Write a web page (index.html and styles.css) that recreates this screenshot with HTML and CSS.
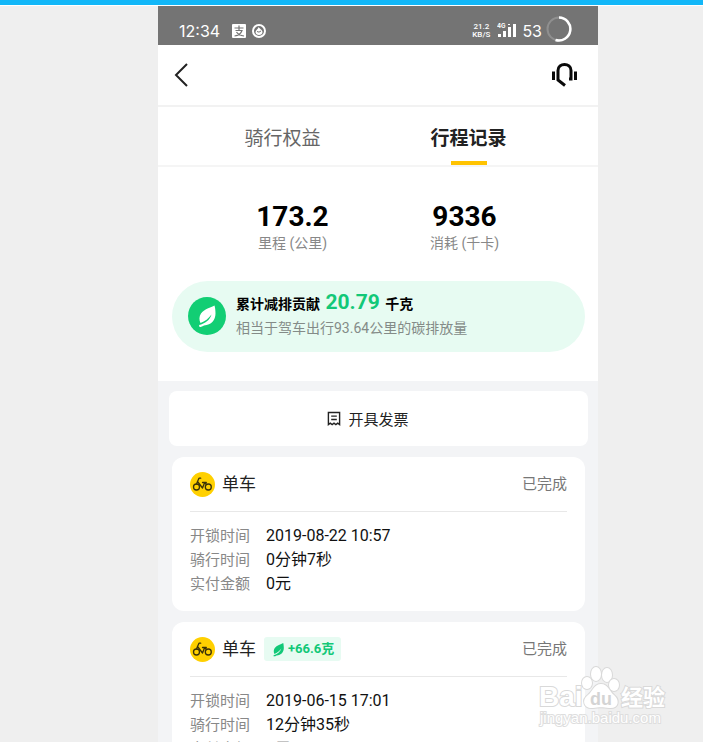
FILE: index.html
```
<!DOCTYPE html>
<html lang="zh-CN">
<head>
    <meta charset="UTF-8">
    <meta name="viewport" content="width=device-width, initial-scale=1.0">
    <title>行程记录</title>
    <link rel="stylesheet" href="styles.css">
</head>
<body>
    <!-- 公用图标 -->
    <svg class="symbols" aria-hidden="true">
        <symbol id="leaf" viewBox="0 0 24 24">
            <path d="M19.500 1.500C16 3.500 9 5 6 9.500C4 12.500 4 16 5.500 19C10 17.500 13.500 14.500 16.500 10.500C15 16 10 19.700 4 21L4.500 23C6 23 8 22.300 9 21.500C16.500 21 20.500 16 20.500 9.500C20.500 6 20 3 19.500 1.500Z"/>
        </symbol>
        <symbol id="bike" viewBox="0 0 25 25">
            <circle cx="12.500" cy="12.500" r="12.500" fill="#ffd000"/>
            <g fill="none" stroke="#3b3208" stroke-width="1.300" stroke-linecap="round" stroke-linejoin="round">
                <circle cx="6.500" cy="15" r="3"/>
                <circle cx="18.300" cy="15" r="3"/>
                <path d="M10.700 6.200H9L7.500 9.500L6.500 12M7.500 9.500L12.500 16L14.700 10.500L16.500 12.500M12.500 10.500H16.300"/>
            </g>
        </symbol>
    </svg>

    <div class="page">
        <main class="phone">
            <div class="status-bar">
                <span class="clock">12:34</span>
                <svg class="pay-icon" width="14" height="14" viewBox="0 0 14 14">
                    <rect width="14" height="14" rx="1" fill="#fff"/>
                    <path d="M2.500 4H11.500M7 1.500V6.500M3.500 6.500H10C9 9.500 6 11.500 2.500 12M4.500 8C6 10.500 9 11.500 12 12" fill="none" stroke="#747474" stroke-width="1.200"/>
                </svg>
                <svg width="14" height="14" viewBox="0 0 14 14">
                    <circle cx="7" cy="7" r="6" fill="none" stroke="#fff" stroke-width="2"/>
                    <path d="M6.500 3C7 4.500 10.500 5.500 10.500 8C10.500 10 9 11 7 11S3.500 10 3.500 8C3.500 6 6.500 5 6.500 3Z" fill="#fff"/>
                    <path d="M5 7.500Q7 9 9 7" fill="none" stroke="#747474"/>
                </svg>
                <span class="net-speed">21.2<br>KB/S</span>
                <svg class="signal" width="19" height="15" viewBox="0 0 19 15" fill="#fff">
                    <text x="0" y="5" font-size="6" font-weight="700">4G</text>
                    <rect x="1" y="11" width="3" height="3"/>
                    <rect x="6" y="8" width="3" height="6"/>
                    <rect x="11" y="4" width="3" height="10"/>
                    <rect x="11" y="1" width="2" height="1"/>
                    <rect x="16" y="1" width="3" height="13"/>
                </svg>
                <span class="battery-level">53</span>
                <svg class="battery" width="26" height="26" viewBox="0 0 26 26" fill="none">
                    <circle cx="13" cy="13" r="11.500" stroke="#8f8f8f" stroke-width="2"/>
                    <path d="M13 1.500A11.500 11.500 0 1 1 9.500 24" stroke="#fff" stroke-width="2.500"/>
                </svg>
            </div>

            <header class="nav-bar">
                <button type="button" aria-label="返回">
                    <svg width="16" height="24" viewBox="0 0 16 24" fill="none" stroke="#222" stroke-width="2">
                        <path d="M13 1L2 12L13 23"/>
                    </svg>
                </button>
                <button type="button" aria-label="客服">
                    <svg width="26" height="26" viewBox="0 0 26 26" fill="none" stroke="#0a0a0a" stroke-width="3">
                        <path d="M2.500 9.500V18M24.500 9.500V18"/>
                        <path d="M18 17H20V8.500C20 .5 7 .5 7 8.500V18L14 23.500"/>
                    </svg>
                </button>
            </header>

            <div class="tabs" role="tablist">
                <button type="button" class="tab" role="tab" aria-selected="false">骑行权益</button>
                <button type="button" class="tab active" role="tab" aria-selected="true">行程记录</button>
            </div>

            <section class="summary">
                <div class="stats">
                    <div class="stat">
                        <strong>173.2</strong>
                        <span>里程 (公里)</span>
                    </div>
                    <div class="stat">
                        <strong>9336</strong>
                        <span>消耗 (千卡)</span>
                    </div>
                </div>
                <div class="carbon">
                    <span class="carbon-icon">
                        <svg width="24" height="24"><use href="#leaf"/></svg>
                    </span>
                    <div class="carbon-text">
                        <p class="carbon-total">累计减排贡献 <em>20.79</em> 千克</p>
                        <p class="carbon-note">相当于驾车出行93.64公里的碳排放量</p>
                    </div>
                </div>
            </section>

            <section class="records">
                <button type="button" class="invoice">
                    <svg width="14" height="15" viewBox="0 0 15 16" fill="none" stroke="#222" stroke-width="1.500">
                        <path d="M1.500 14.500V1.500H13.500V14.500L11.500 13L9.500 14.500L7.500 13L5.500 14.500L3.500 13ZM4.500 5.500H10.500M4.500 9H10.500"/>
                    </svg>
                    开具发票
                </button>

                <article class="card">
                    <div class="card-head">
                        <svg width="25" height="25"><use href="#bike"/></svg>
                        <h2>单车</h2>
                        <span class="state">已完成</span>
                    </div>
                    <dl>
                        <dt>开锁时间</dt><dd>2019-08-22 10:57</dd>
                        <dt>骑行时间</dt><dd>0分钟7秒</dd>
                        <dt>实付金额</dt><dd>0元</dd>
                    </dl>
                </article>

                <article class="card">
                    <div class="card-head">
                        <svg width="25" height="25"><use href="#bike"/></svg>
                        <h2>单车</h2>
                        <span class="saving">
                            <svg width="15" height="15"><use href="#leaf"/></svg>
                            +66.6克
                        </span>
                        <span class="state">已完成</span>
                    </div>
                    <dl>
                        <dt>开锁时间</dt><dd>2019-06-15 17:01</dd>
                        <dt>骑行时间</dt><dd>12分钟35秒</dd>
                        <dt>实付金额</dt><dd>0元</dd>
                    </dl>
                </article>
            </section>
        </main>
    </div>

    <!-- 水印 -->
    <svg class="watermark" width="132" height="66" viewBox="0 0 132 66">
        <g class="mark">
            <text x="2" y="42" font-size="28" font-weight="700">Bai</text>
            <ellipse cx="50" cy="19" rx="5" ry="6"/>
            <ellipse cx="59" cy="10" rx="5" ry="7"/>
            <ellipse cx="70" cy="11" rx="5" ry="7"/>
            <ellipse cx="77" cy="21" rx="5" ry="6"/>
            <path d="M64 20C57 20 56 27 51 31C44 36 47 45 56 44C62 43 66 43 72 44C82 45 83 36 77 31C72 27 71 20 64 20Z"/>
            <text x="84" y="41" font-size="22" font-weight="700">经验</text>
        </g>
        <text class="paw-text" x="53" y="41" font-size="18" font-weight="700">du</text>
        <text class="site" x="3" y="59" font-size="15">jingyan.baidu.com</text>
    </svg>
</body>
</html>
```
FILE: styles.css
```
* {
    box-sizing: border-box;
}
body {
    position: relative;
    height: 100vh;
    margin: 0;
    overflow: hidden;
    border-top: 5px solid #12b7f8;
    background-color: #efefef;
    font-family: Roboto, "Noto Sans CJK SC", sans-serif;
    font-size: 15px;
    color: #111;
}
button {
    padding: 0;
    border: none;
    background: none;
    font-family: inherit;
    color: inherit;
    cursor: pointer;
}
svg {
    display: block;
    flex-shrink: 0;
}
h2, p, dl, dd {
    margin: 0;
}
.symbols {
    position: absolute;
    width: 0;
    height: 0;
}
.page {
    padding: 0 105px 0 158px;
    border-top: 1px solid #fff;
}
.phone {
    background-color: #fff;
}

/* 状态栏 */
.status-bar {
    display: flex;
    align-items: center;
    height: 39px;
    padding: 10px 26px 0 21px;
    background-color: #747474;
    font-family: Inter, sans-serif;
    color: #fff;
}
.clock, .battery-level {
    font-size: 16px;
}
.pay-icon {
    margin: 0 6px 0 12px;
}
.net-speed {
    margin-left: auto;
    font-family: Roboto, sans-serif;
    font-size: 8px;
    font-weight: 500;
    line-height: 8px;
    text-align: center;
}
.signal {
    margin: 0 6px 0 7px;
}
.battery-level {
    margin-right: 4px;
}
.battery {
    margin-top: -3px;
}

/* 导航 */
.nav-bar {
    display: flex;
    align-items: center;
    justify-content: space-between;
    height: 62px;
    padding: 0 21px 0 16px;
    border-bottom: 2px solid #f2f2f2;
}
.tabs {
    display: flex;
    justify-content: center;
    height: 60px;
    padding-right: 5px;
    border-bottom: 2px solid #f5f5f5;
}
.tab {
    position: relative;
    width: 186px;
    font-size: 19px;
    color: #666;
}
.tab.active {
    font-weight: 700;
    color: #222;
}
.tab.active::after {
    content: "";
    position: absolute;
    bottom: 0;
    left: 50%;
    width: 36px;
    height: 4px;
    margin-left: -18px;
    background-color: #ffc300;
}

/* 统计 */
.summary {
    padding: 33px 13px 29px 14px;
}
.stats {
    display: flex;
    justify-content: center;
    margin-bottom: 28px;
}
.stat {
    display: flex;
    flex-direction: column;
    width: 172px;
    text-align: center;
}
.stat strong {
    font-size: 28px;
    line-height: 34px;
    color: #000;
}
.stat span {
    font-size: 14px;
    line-height: 19px;
    color: #888;
}
.carbon {
    display: flex;
    align-items: center;
    gap: 10px;
    height: 71px;
    padding: 0 16px 2px;
    border-radius: 36px;
    background-color: #e7fbf2;
}
.carbon-icon {
    display: flex;
    align-items: center;
    justify-content: center;
    width: 38px;
    height: 38px;
    border-radius: 50%;
    background-color: #12ce74;
    fill: #fff;
}
.carbon-text {
    font-size: 14px;
    line-height: 24px;
}
.carbon-total {
    font-weight: 700;
    color: #000;
}
.carbon-total em {
    margin: 0 2px;
    font-size: 21px;
    font-style: normal;
    line-height: 21px;
    color: #12c878;
}
.carbon-note {
    color: #848b88;
}

/* 行程列表 */
.records {
    display: flex;
    flex-direction: column;
    gap: 11px;
    padding: 10px 10px 20px 11px;
    background-color: #f3f4f6;
}
.invoice {
    display: flex;
    align-items: center;
    justify-content: center;
    gap: 7px;
    height: 55px;
    padding-right: 21px;
    border-radius: 8px;
    background-color: #fff;
    font-size: 15px;
    color: #222;
}
.card {
    margin: 0 3px;
    padding: 0 18px 15px;
    border-radius: 12px;
    background-color: #fff;
}
.card-head {
    display: flex;
    align-items: center;
    height: 55px;
    border-bottom: 1px solid #e8e8e8;
}
.card h2 {
    margin: 0 8px 0 7px;
    padding-bottom: 3px;
    font-size: 17px;
    font-weight: 400;
    color: #222;
}
.state {
    margin-left: auto;
    padding-bottom: 3px;
    color: #777;
}
.saving {
    display: flex;
    align-items: center;
    gap: 2px;
    height: 24px;
    padding: 0 7px;
    border-radius: 3px;
    background-color: #e7fbf2;
    font-size: 13px;
    font-weight: 700;
    line-height: 22px;
    color: #12c878;
    fill: #12c878;
}
.card dl {
    display: grid;
    grid-template-columns: 76px 1fr;
    padding-top: 12px;
    line-height: 24px;
}
.card dt {
    color: #888;
}
.card dd {
    font-size: 16px;
}

/* 水印 */
.watermark {
    position: absolute;
    right: 34px;
    bottom: 12px;
    font-family: "Liberation Sans", "Noto Sans CJK SC", sans-serif;
}
.mark {
    fill: #fff;
    stroke: #d9d9d9;
    stroke-width: 2px;
    paint-order: stroke;
}
.paw-text {
    fill: #d4d4d4;
}
.site {
    fill: #fff;
    stroke: #dedede;
    stroke-width: 2px;
    paint-order: stroke;
}
```
